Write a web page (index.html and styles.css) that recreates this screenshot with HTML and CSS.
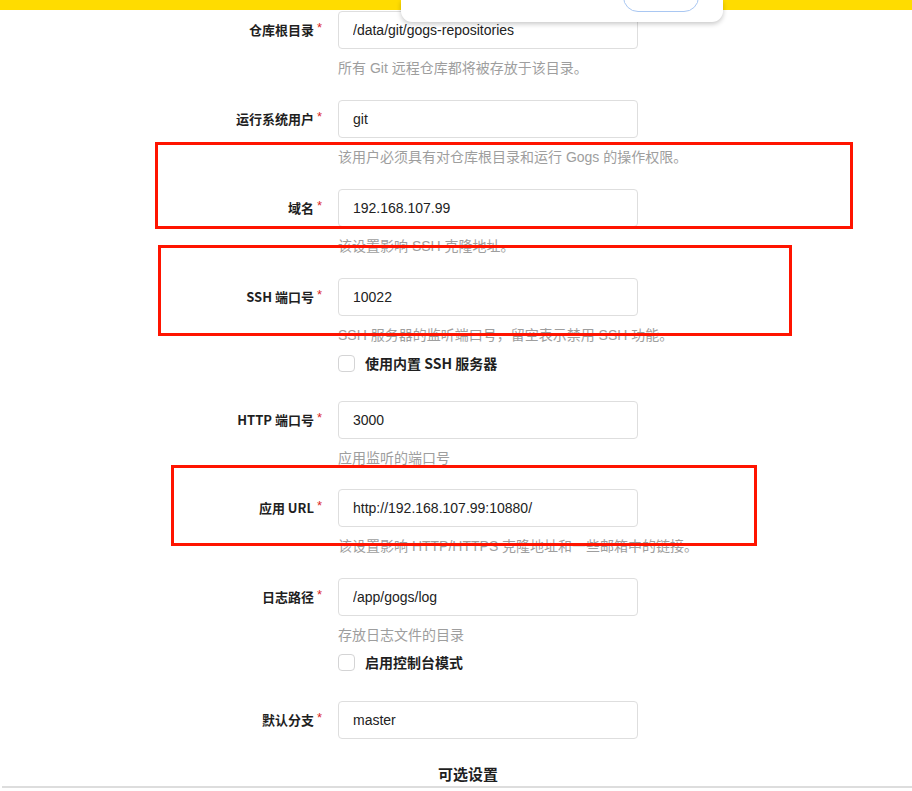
FILE: index.html
```html
<!DOCTYPE html>
<html lang="zh-CN">
<head>
<meta charset="utf-8">
<title>Gogs 安装</title>
<link rel="stylesheet" href="styles.css">
</head>
<body>
<div class="topbar"></div>
<div class="popup"><span class="pill"></span></div>

<form class="form">
  <div class="field">
    <label class="label"><span class="label-text">仓库根目录</span><span class="req">*</span></label>
    <input class="input" type="text" value="/data/git/gogs-repositories">
    <p class="help">所有 Git 远程仓库都将被存放于该目录。</p>
  </div>

  <div class="field">
    <label class="label"><span class="label-text">运行系统用户</span><span class="req">*</span></label>
    <input class="input" type="text" value="git">
    <p class="help">该用户必须具有对仓库根目录和运行 Gogs 的操作权限。</p>
  </div>

  <div class="field">
    <label class="label"><span class="label-text">域名</span><span class="req">*</span></label>
    <input class="input" type="text" value="192.168.107.99">
    <p class="help">该设置影响 SSH 克隆地址。</p>
  </div>

  <div class="field">
    <label class="label"><span class="label-text">SSH 端口号</span><span class="req">*</span></label>
    <input class="input" type="text" value="10022">
    <p class="help">SSH 服务器的监听端口号，留空表示禁用 SSH 功能。</p>
    <div class="check"><span class="box"></span><span class="check-label">使用内置 SSH 服务器</span></div>
  </div>

  <div class="field field-tight">
    <label class="label"><span class="label-text">HTTP 端口号</span><span class="req">*</span></label>
    <input class="input" type="text" value="3000">
    <p class="help">应用监听的端口号</p>
  </div>

  <div class="field">
    <label class="label"><span class="label-text">应用 URL</span><span class="req">*</span></label>
    <input class="input" type="text" value="http://192.168.107.99:10880/">
    <p class="help">该设置影响 HTTP/HTTPS 克隆地址和一些邮箱中的链接。</p>
  </div>

  <div class="field">
    <label class="label"><span class="label-text">日志路径</span><span class="req">*</span></label>
    <input class="input" type="text" value="/app/gogs/log">
    <p class="help">存放日志文件的目录</p>
    <div class="check check-tight"><span class="box"></span><span class="check-label">启用控制台模式</span></div>
  </div>

  <div class="field">
    <label class="label"><span class="label-text">默认分支</span><span class="req">*</span></label>
    <input class="input" type="text" value="master">
  </div>

  <h4 class="section">可选设置</h4>
</form>

<div class="mark mark1"></div>
<div class="mark mark2"></div>
<div class="mark mark3"></div>
</body>
</html>
```

FILE: styles.css
```css
html, body {
  margin: 0;
  padding: 0;
  background: #ffffff;
}
body {
  position: relative;
  width: 912px;
  height: 791px;
  overflow: hidden;
  font-family: "Liberation Sans", "Noto Sans CJK SC", sans-serif;
  color: rgba(0, 0, 0, 0.87);
}
.topbar {
  height: 10px;
  background: #ffdc00;
}
.popup {
  position: absolute;
  left: 401px;
  top: 0;
  width: 322px;
  height: 22px;
  background: #ffffff;
  border-radius: 0 0 11px 11px;
  box-shadow: 0 2px 5px rgba(0, 0, 0, 0.22);
}
.pill {
  position: absolute;
  left: 222px;
  top: -18px;
  width: 76px;
  height: 30px;
  border: 1px solid #a9c7f2;
  border-radius: 16px;
  box-sizing: border-box;
}
.form {
  margin: 0;
  padding-top: 1px;
}
.field {
  display: grid;
  grid-template-columns: 322px 300px;
  column-gap: 16px;
  margin-bottom: 22px;
}
.field-tight {
  margin-bottom: 21px;
}
.label {
  grid-column: 1;
  grid-row: 1;
  display: flex;
  justify-content: flex-end;
  align-items: center;
  height: 38px;
  font-family: "Noto Sans CJK SC", "Liberation Sans", sans-serif;
  font-weight: 700;
  font-size: 13px;
  color: #1f1f1f;
  white-space: nowrap;
}
.label-text {
  line-height: 18px;
  margin-top: -1px;
}
.req {
  align-self: flex-start;
  margin-top: 10px;
  margin-left: 3px;
  color: #db2828;
  font-size: 13px;
  line-height: 13px;
  font-family: "Liberation Sans", sans-serif;
  font-weight: 400;
}
.input {
  grid-column: 2;
  grid-row: 1;
  box-sizing: border-box;
  width: 300px;
  height: 38px;
  margin: 0;
  padding: 0 14px;
  border: 1px solid #dedede;
  border-radius: 4px;
  font-family: "Liberation Sans", sans-serif;
  font-size: 14px;
  color: #222222;
  background: #ffffff;
  outline: none;
}
.help {
  grid-column: 2;
  margin: 9px 0 0;
  line-height: 20px;
  height: 20px;
  font-size: 14px;
  color: #9e9e9e;
  white-space: nowrap;
  font-family: "Liberation Sans", "Noto Sans CJK SC", sans-serif;
}
.check {
  grid-column: 2;
  display: flex;
  align-items: center;
  gap: 10px;
  height: 22px;
  margin-top: 7px;
  margin-bottom: 5px;
}
.check-tight {
  margin-top: 6px;
  margin-bottom: 6px;
}
.box {
  box-sizing: border-box;
  width: 17px;
  height: 17px;
  border: 1px solid #d4d4d5;
  border-radius: 4px;
  background: #ffffff;
}
.check-label {
  font-family: "Noto Sans CJK SC", "Liberation Sans", sans-serif;
  font-weight: 700;
  font-size: 14px;
  color: #1f1f1f;
}
.section {
  margin: 24px 0 0 2px;
  padding: 0 0 1px 22px;
  text-align: center;
  font-family: "Noto Sans CJK SC", sans-serif;
  font-size: 15px;
  font-weight: 700;
  line-height: 22px;
  color: #1f1f1f;
  border-bottom: 2px solid #dddddd;
}
.mark {
  position: absolute;
  box-sizing: border-box;
  border: 3px solid #ff1400;
}
.mark1 {
  left: 155px;
  top: 142px;
  width: 698px;
  height: 87px;
}
.mark2 {
  left: 158px;
  top: 245px;
  width: 634px;
  height: 91px;
}
.mark3 {
  left: 171px;
  top: 465px;
  width: 586px;
  height: 81px;
}
```
